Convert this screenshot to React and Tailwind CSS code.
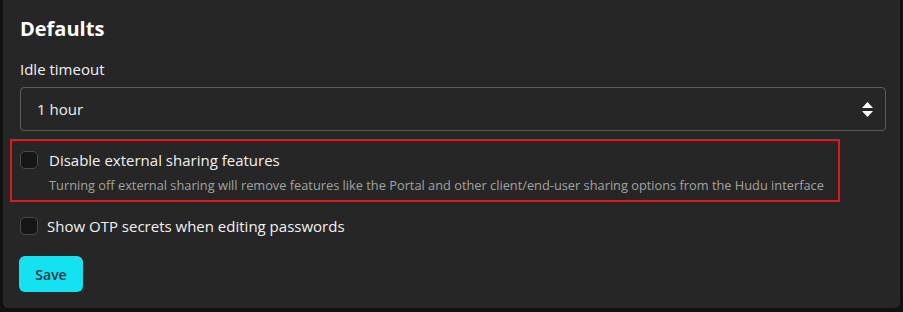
export default function App() {
  const font = { fontFamily: '"Open Sans", "Noto Sans", sans-serif' };
  return (
    <div className="w-[903px] h-[312px] bg-[#111111] pl-[3px]" style={font}>
      <div className="w-[897px] h-[308px] bg-[#262626] rounded-b-[5px] pl-[17px] pr-[14px] pt-[14px]">
        <h2 className="text-[20px] leading-[30px] font-bold text-white">Defaults</h2>
        <div className="mt-[15px] text-[15px] leading-[20px] text-[#f2f2f2]">Idle timeout</div>
        <div className="mt-[8px] h-[44px] border border-[#5c5c5c] rounded-[4px] flex items-center justify-between pl-[16px] pr-[12px]">
          <span className="text-[15px] text-[#f2f2f2]">1 hour</span>
          <svg width="11" height="15" viewBox="0 0 11 15" fill="#ffffff">
            <path d="M5.5 0 L11 6 L0 6 Z" />
            <path d="M0 9 L11 9 L5.5 15 Z" />
          </svg>
        </div>
        <div className="mt-[8px] ml-[-10px] w-[830px] h-[63px] border-2 border-[#e0191e] pl-[8px] pt-[9px] flex gap-[11px]">
          <div className="w-[18px] h-[18px] mt-[1px] rounded-[5px] bg-[#161616] border border-[#4a4a4a] shrink-0" />
          <div>
            <div className="text-[15px] leading-[20px] text-[#f2f2f2]">Disable external sharing features</div>
            <div className="mt-[7px] text-[12.8px] leading-[17px] text-[#a3a3a3]">Turning off external sharing will remove features like the Portal and other client/end-user sharing options from the Hudu interface</div>
          </div>
        </div>
        <div className="mt-[14px] flex items-center gap-[9px]">
          <div className="w-[18px] h-[18px] rounded-[5px] bg-[#161616] border border-[#4a4a4a] shrink-0" />
          <span className="text-[15px] leading-[20px] text-[#f2f2f2]">Show OTP secrets when editing passwords</span>
        </div>
        <button className="mt-[20px] ml-[-1px] h-[36px] w-[64px] rounded-[6px] bg-[#15e2f0] text-[14px] font-semibold text-[#1b363c]">Save</button>
      </div>
    </div>
  );
}
